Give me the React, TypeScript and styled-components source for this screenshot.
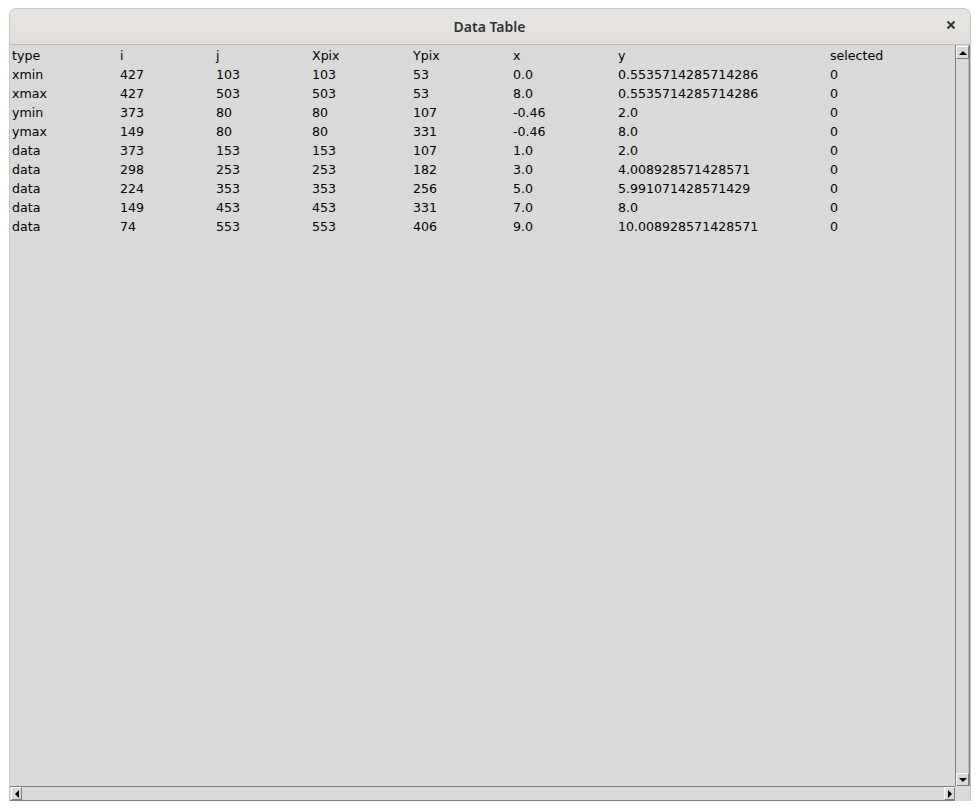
import React from "react";
import styled, { createGlobalStyle } from "styled-components";

const Global = createGlobalStyle`
  html, body { margin: 0; padding: 0; background: #ffffff; }
  body { font-family: "DejaVu Sans", "Noto Sans", sans-serif; }
`;

const Page = styled.div`
  padding: 8px 0 0 9px;
  width: 980px;
  height: 811px;
  box-sizing: border-box;
`;

const Window = styled.div`
  width: 962px;
  height: 793px;
  display: flex;
  flex-direction: column;
  border-radius: 8px 8px 0 0;
  border: 1px solid #c9c6c1;
  border-bottom: none;
  box-sizing: border-box;
  overflow: hidden;
  background: #d9d9d9;
`;

const TitleBar = styled.div`
  height: 36px;
  flex: none;
  position: relative;
  display: flex;
  align-items: center;
  justify-content: center;
  background: linear-gradient(#e8e6e3, #e1dedb);
  border-bottom: 1px solid #bfbbb6;
  box-sizing: border-box;
`;

const Title = styled.div`
  font-family: "Noto Sans", "DejaVu Sans", sans-serif;
  font-weight: 600;
  font-size: 14px;
  color: #2e3436;
  margin-left: -1px;
`;

const Close = styled.div`
  position: absolute;
  right: 11px;
  top: 8px;
  width: 16px;
  height: 16px;
  display: flex;
  align-items: center;
  justify-content: center;
`;

const Body = styled.div`
  flex: 1;
  display: grid;
  grid-template-columns: 1fr 15px;
  grid-template-rows: 1fr 15px;
  min-height: 0;
`;

const TableArea = styled.div`
  padding: 1px 0 0 2px;
  overflow: hidden;
`;

const Grid = styled.div`
  display: grid;
  grid-template-columns: 108px 96px 96px 101px 100px 105px 212px 120px;
  grid-auto-rows: 19px;
  font-family: "DejaVu Sans", sans-serif;
  font-size: 12.6px;
  color: #000;
  line-height: 19px;
`;

const Cell = styled.div`
  white-space: nowrap;
`;

const VScroll = styled.div`
  display: flex;
  flex-direction: column;
  border-left: 1px solid #7d7d7d;
  border-right: 1px solid #7d7d7d;
  box-shadow: inset -1px 0 0 #bdbdbd;
  background: #d9d9d9;
  box-sizing: border-box;
  padding: 1px 1px 0 0;
`;

const Track = styled.div`
  flex: 1;
`;

const HScroll = styled.div`
  display: flex;
  flex-direction: row;
  border-top: 1px solid #7d7d7d;
  border-bottom: 1px solid #7d7d7d;
  background: #d9d9d9;
  box-sizing: border-box;
  padding: 0 0 0 1px;
`;

const ArrowBtn = styled.div<{ $w: number; $h: number }>`
  width: ${(p) => p.$w}px;
  height: ${(p) => p.$h}px;
  flex: none;
  box-sizing: border-box;
  border-top: 1px solid #ffffff;
  border-left: 1px solid #ffffff;
  border-right: 1px solid #7d7d7d;
  border-bottom: 1px solid #7d7d7d;
  background: #d9d9d9;
  display: flex;
  align-items: center;
  justify-content: center;
`;

const Corner = styled.div`
  background: #d9d9d9;
`;

const header = ["type", "i", "j", "Xpix", "Ypix", "x", "y", "selected"];
const rows = [
  ["xmin", "427", "103", "103", "53", "0.0", "0.5535714285714286", "0"],
  ["xmax", "427", "503", "503", "53", "8.0", "0.5535714285714286", "0"],
  ["ymin", "373", "80", "80", "107", "-0.46", "2.0", "0"],
  ["ymax", "149", "80", "80", "331", "-0.46", "8.0", "0"],
  ["data", "373", "153", "153", "107", "1.0", "2.0", "0"],
  ["data", "298", "253", "253", "182", "3.0", "4.008928571428571", "0"],
  ["data", "224", "353", "353", "256", "5.0", "5.991071428571429", "0"],
  ["data", "149", "453", "453", "331", "7.0", "8.0", "0"],
  ["data", "74", "553", "553", "406", "9.0", "10.008928571428571", "0"],
];

const Tri = ({ dir }: { dir: "up" | "down" | "left" | "right" }) => {
  const pts =
    dir === "up"
      ? "0,5 4,1 8,5"
      : dir === "down"
      ? "0,1 8,1 4,5"
      : dir === "left"
      ? "5,0 5,8 1,4"
      : "1,0 1,8 5,4";
  const w = dir === "up" || dir === "down" ? 8 : 6;
  const h = dir === "up" || dir === "down" ? 6 : 8;
  return (
    <svg width={w} height={h} viewBox={`0 0 ${w} ${h}`}>
      <polygon points={pts} fill="#000" />
    </svg>
  );
};

export default function App() {
  return (
    <>
      <Global />
      <Page>
        <Window>
          <TitleBar>
            <Title>Data Table</Title>
            <Close>
              <svg width="10" height="10" viewBox="0 0 10 10">
                <path d="M1.5 1.5 L8.5 8.5 M8.5 1.5 L1.5 8.5" stroke="#2e3436" strokeWidth="2" />
              </svg>
            </Close>
          </TitleBar>
          <Body>
            <TableArea>
              <Grid>
                {header.map((h, i) => (
                  <Cell key={"h" + i}>{h}</Cell>
                ))}
                {rows.map((r, ri) =>
                  r.map((c, ci) => <Cell key={ri + "-" + ci}>{c}</Cell>)
                )}
              </Grid>
            </TableArea>
            <VScroll>
              <ArrowBtn $w={13} $h={13}>
                <Tri dir="up" />
              </ArrowBtn>
              <Track />
              <ArrowBtn $w={13} $h={13}>
                <Tri dir="down" />
              </ArrowBtn>
            </VScroll>
            <HScroll>
              <ArrowBtn $w={11} $h={13}>
                <Tri dir="left" />
              </ArrowBtn>
              <Track />
              <ArrowBtn $w={11} $h={13}>
                <Tri dir="right" />
              </ArrowBtn>
            </HScroll>
            <Corner />
          </Body>
        </Window>
      </Page>
    </>
  );
}
